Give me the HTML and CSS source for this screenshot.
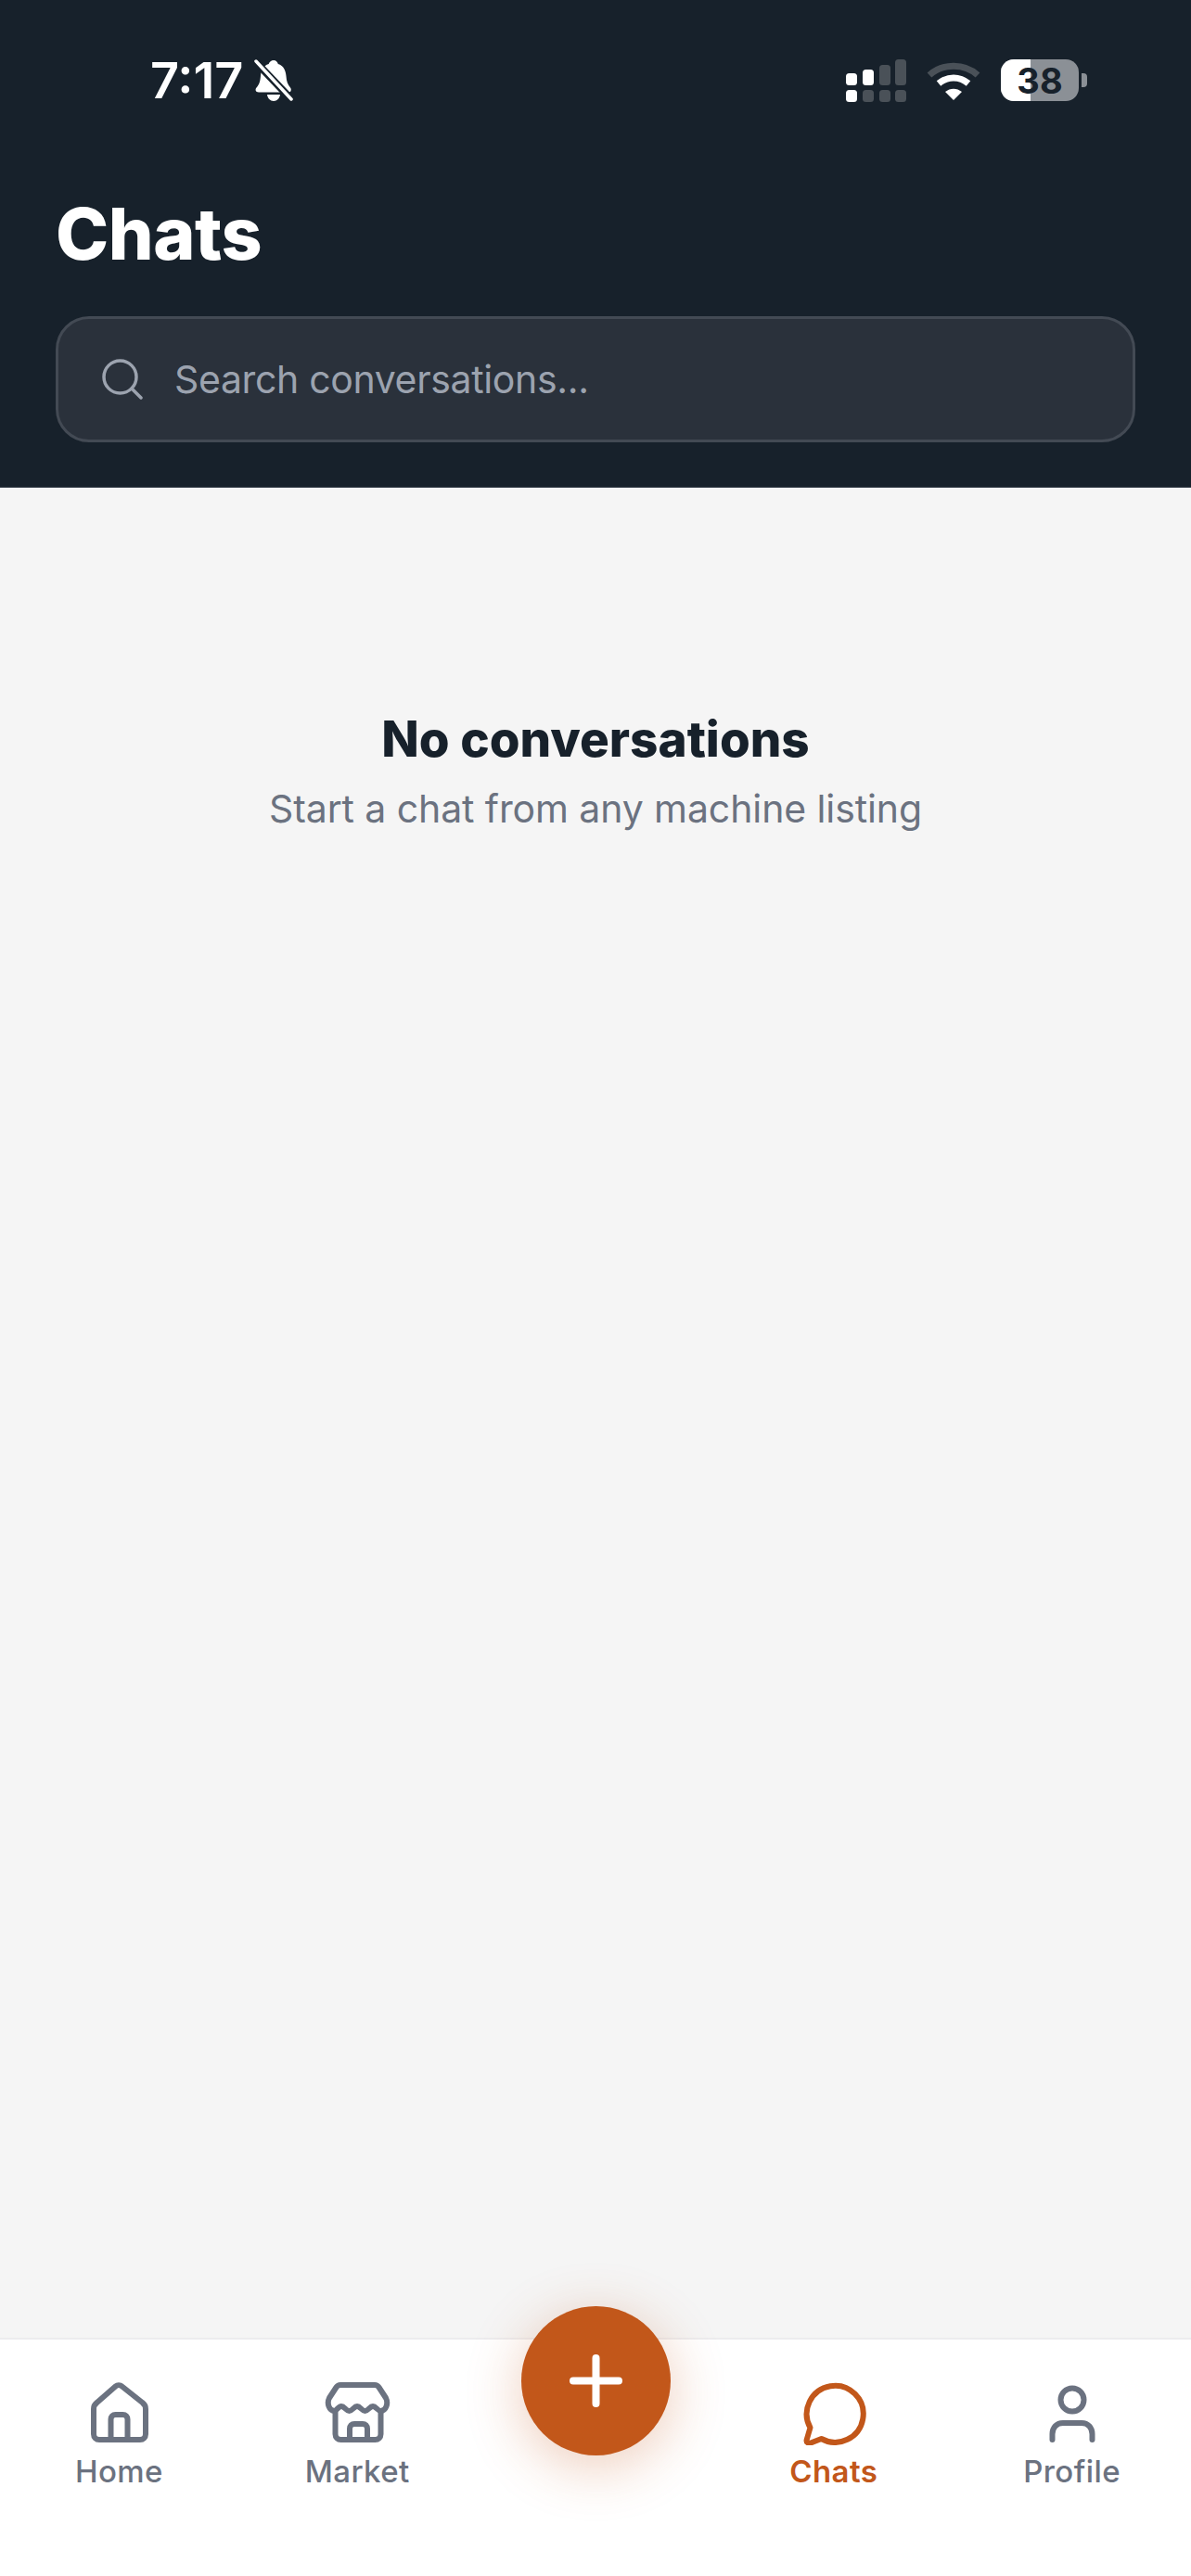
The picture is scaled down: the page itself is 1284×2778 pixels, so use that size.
FILE: index.html
```html
<!DOCTYPE html>
<html lang="en">
<head>
    <meta charset="UTF-8">
    <meta name="viewport" content="width=device-width, initial-scale=1.0">
    <title>Chats</title>
    <link rel="stylesheet" href="styles.css">
</head>
<body>
    <div class="app">
        <header class="header">
            <div class="status-bar">
                <div class="status-left">
                    <span class="time">7:17</span>
                    <svg class="bell" viewBox="0 0 42 46">
                        <path d="M21 1c2.500 0 4.200 1.700 4.800 4 6 1.800 8.200 7 8.700 13 .4 5.500 1.500 9 4.500 12.500 1.500 1.800 1 5-2 5H5c-3.500 0-4.300-3-2.500-5 3.200-3.500 4-7 4.500-12.500.5-6 2.800-11.200 8.700-13C16.300 2.700 18.500 1 21 1z" fill="#fff"/>
                        <path d="M14 38h14c-.5 4-3.300 7-7 7s-6.500-3-7-7z" fill="#fff"/>
                        <path d="M1 2l40 42" stroke="#17212b" stroke-width="8"/>
                        <path d="M2 2l38 41" stroke="#fff" stroke-width="3.500" stroke-linecap="round"/>
                    </svg>
                </div>
                <div class="status-right">
                    <svg class="signal" viewBox="0 0 65 46">
                        <rect x="0" y="15" width="12" height="13" rx="3.500" fill="#fff"/>
                        <rect x="0" y="33" width="12" height="13" rx="3.500" fill="#fff"/>
                        <rect x="18" y="11" width="12" height="17" rx="3.500" fill="#fff"/>
                        <rect x="18" y="33" width="12" height="13" rx="3.500" fill="#4a5158"/>
                        <rect x="36" y="6" width="12" height="22" rx="3.500" fill="#4a5158"/>
                        <rect x="36" y="33" width="12" height="13" rx="3.500" fill="#4a5158"/>
                        <rect x="53" y="0" width="12" height="28" rx="3.500" fill="#4a5158"/>
                        <rect x="53" y="33" width="12" height="13" rx="3.500" fill="#4a5158"/>
                    </svg>
                    <svg class="wifi" viewBox="0 0 58 42">
                        <path d="M3 15C17 2 41 2 55 15" fill="none" stroke="#4a5158" stroke-width="7"/>
                        <path d="M13 24c9.500-8 22.500-8 32 0" fill="none" stroke="#fff" stroke-width="7"/>
                        <path d="M20 33c5.500-4.500 12.500-4.500 18 0l-9 9z" fill="#fff"/>
                    </svg>
                    <div class="battery">
                        <div class="battery-body">
                            <div class="battery-fill"></div>
                            <span class="battery-level">38</span>
                        </div>
                        <div class="battery-nub"></div>
                    </div>
                </div>
            </div>
            <h1 class="page-title">Chats</h1>
            <div class="search">
                <svg class="search-icon" viewBox="0 0 44 44">
                    <circle cx="19.500" cy="19.500" r="17.500" fill="none" stroke="#9ca3af" stroke-width="3.500"/>
                    <path d="M32 32l10 10" stroke="#9ca3af" stroke-width="3.500" stroke-linecap="round"/>
                </svg>
                <span class="search-text">Search conversations...</span>
            </div>
        </header>

        <main class="content">
            <h2 class="empty-title">No conversations</h2>
            <p class="empty-text">Start a chat from any machine listing</p>
        </main>

        <nav class="tabbar">
            <div class="tab">
                <svg class="tab-icon" viewBox="0 0 72 72">
                    <path d="M9 33C9 30 10.500 27.500 12.500 26L32.500 8.500C34.500 6.700 37.500 6.700 39.500 8.500L61.500 26C63.500 27.500 65 30 65 33V60C65 63.500 62.500 66 59 66H15C11.500 66 9 63.500 9 60Z"/>
                    <path d="M27.500 66V44C27.500 41 29.500 39 32.500 39H40.500C43.500 39 45.500 41 45.500 44V66"/>
                </svg>
                <span class="tab-label">Home</span>
            </div>
            <div class="tab">
                <svg class="tab-icon" viewBox="0 0 72 72">
                    <path d="M18 7H55C57 7 58.500 8 59.500 9.500L67 21C70 27 67 35 61.500 35C58 35 56.500 30 53 30C49.500 30 48 35 44.500 35C41 35 39.500 30 36 30C32.500 30 31 35 27.500 35C24 35 22.500 30 19 30C15.500 30 14 35 11.500 35C6 35 3 27 6 21L13.500 9.500C14.500 8 16 7 18 7Z"/>
                    <path d="M12.500 36V60C12.500 63.500 15 66 18.500 66H55.500C59 66 61.500 63.500 61.500 60V36"/>
                    <path d="M28 66V54C28 51 30 49 33 49H42C45 49 47 51 47 54V66"/>
                </svg>
                <span class="tab-label">Market</span>
            </div>
            <div class="tab">
                <button class="fab" aria-label="New">
                    <svg class="fab-icon" viewBox="0 0 57 57">
                        <path d="M28.500 4V53M4 28.500H53"/>
                    </svg>
                </button>
            </div>
            <div class="tab tab-active">
                <svg class="tab-icon" viewBox="0 0 72 72">
                    <path d="M10.500 53A30.500 30.500 0 1 1 22.500 65L11 69.500C8 70.500 6 68.500 6.700 66Z"/>
                </svg>
                <span class="tab-label">Chats</span>
            </div>
            <div class="tab">
                <svg class="tab-icon" viewBox="0 0 72 72">
                    <circle cx="36" cy="23" r="12.500"/>
                    <path d="M14.500 66V60C14.500 53 19 48 26 48H46C53 48 57.500 53 57.500 60V66"/>
                </svg>
                <span class="tab-label">Profile</span>
            </div>
        </nav>
    </div>
</body>
</html>
```

FILE: styles.css
```css
* {
    box-sizing: border-box;
}

body {
    margin: 0;
    font-family: Inter, "Liberation Sans", sans-serif;
    background-color: #f5f5f5;
}

.app {
    display: flex;
    flex-direction: column;
    width: 1284px;
    height: 2778px;
    overflow: hidden;
}

.header {
    height: 526px;
    padding: 63px 60px 0;
    background-color: #17212b;
    border-bottom: 1px solid #3a434d;
}

.status-bar {
    display: flex;
    justify-content: space-between;
    height: 47px;
    padding: 0 52px 0 102px;
}

.status-left {
    display: flex;
    align-items: center;
    gap: 12px;
}

.time {
    color: #fff;
    font-size: 54px;
    font-weight: 600;
}

.bell {
    width: 42px;
    height: 46px;
}

.status-right {
    display: flex;
    align-items: center;
}

.signal {
    width: 65px;
    height: 46px;
    margin-right: 22px;
}

.wifi {
    width: 58px;
    height: 42px;
    margin-right: 22px;
}

.battery {
    display: flex;
    align-items: center;
    gap: 3px;
}

.battery-body {
    display: flex;
    align-items: center;
    justify-content: center;
    position: relative;
    width: 84px;
    height: 45px;
    border-radius: 14px;
    overflow: hidden;
    background-color: #8b9096;
}

.battery-fill {
    position: absolute;
    left: 0;
    top: 0;
    bottom: 0;
    width: 38%;
    background-color: #fff;
}

.battery-level {
    position: relative;
    color: #17212b;
    font-size: 38px;
    font-weight: 700;
}

.battery-nub {
    width: 6px;
    height: 15px;
    border-radius: 0 4px 4px 0;
    background-color: #8b9096;
}

.page-title {
    margin: 98px 0 0;
    color: #fff;
    font-size: 77px;
    line-height: 88px;
    font-weight: 800;
    letter-spacing: -0.5px;
}

.search {
    display: flex;
    align-items: center;
    gap: 34px;
    height: 136px;
    margin-top: 45px;
    padding-left: 47px;
    background-color: #2a313b;
    border: 3px solid #434a54;
    border-radius: 36px;
}

.search-icon {
    width: 44px;
    height: 44px;
}

.search-text {
    color: #9ca3af;
    font-size: 41px;
    letter-spacing: -0.35px;
}

.content {
    flex: 1;
    padding-top: 240px;
    text-align: center;
}

.empty-title {
    margin: 0;
    color: #17212b;
    font-size: 53px;
    line-height: 62px;
    font-weight: 800;
}

.empty-text {
    margin: 18px 0 0;
    color: #6b7280;
    font-size: 41px;
    line-height: 52px;
    letter-spacing: -0.1px;
}

.tabbar {
    display: grid;
    grid-template-columns: repeat(5, 1fr);
    height: 257px;
    background-color: #fff;
    border-top: 2px solid #ececee;
}

.tab {
    display: flex;
    flex-direction: column;
    align-items: center;
    padding-top: 42px;
    color: #6b7280;
}

.tab-active {
    color: #c2571a;
}

.tab-icon {
    width: 72px;
    height: 72px;
    fill: none;
    stroke: currentColor;
    stroke-width: 6;
    stroke-linecap: round;
    stroke-linejoin: round;
}

.tab-label {
    margin-top: 8px;
    font-size: 33px;
    line-height: 40px;
    font-weight: 500;
    letter-spacing: 0.4px;
}

.tab-active .tab-label {
    font-weight: 600;
}

.fab {
    display: flex;
    align-items: center;
    justify-content: center;
    flex: none;
    width: 161px;
    height: 161px;
    margin: -78px 0 0 2px;
    padding: 0;
    border: none;
    border-radius: 50%;
    background-color: #c2571a;
    box-shadow: 0 12px 60px rgba(194, 87, 26, 0.3);
}

.fab-icon {
    width: 57px;
    height: 57px;
    fill: none;
    stroke: #fff;
    stroke-width: 8;
    stroke-linecap: round;
}
```
